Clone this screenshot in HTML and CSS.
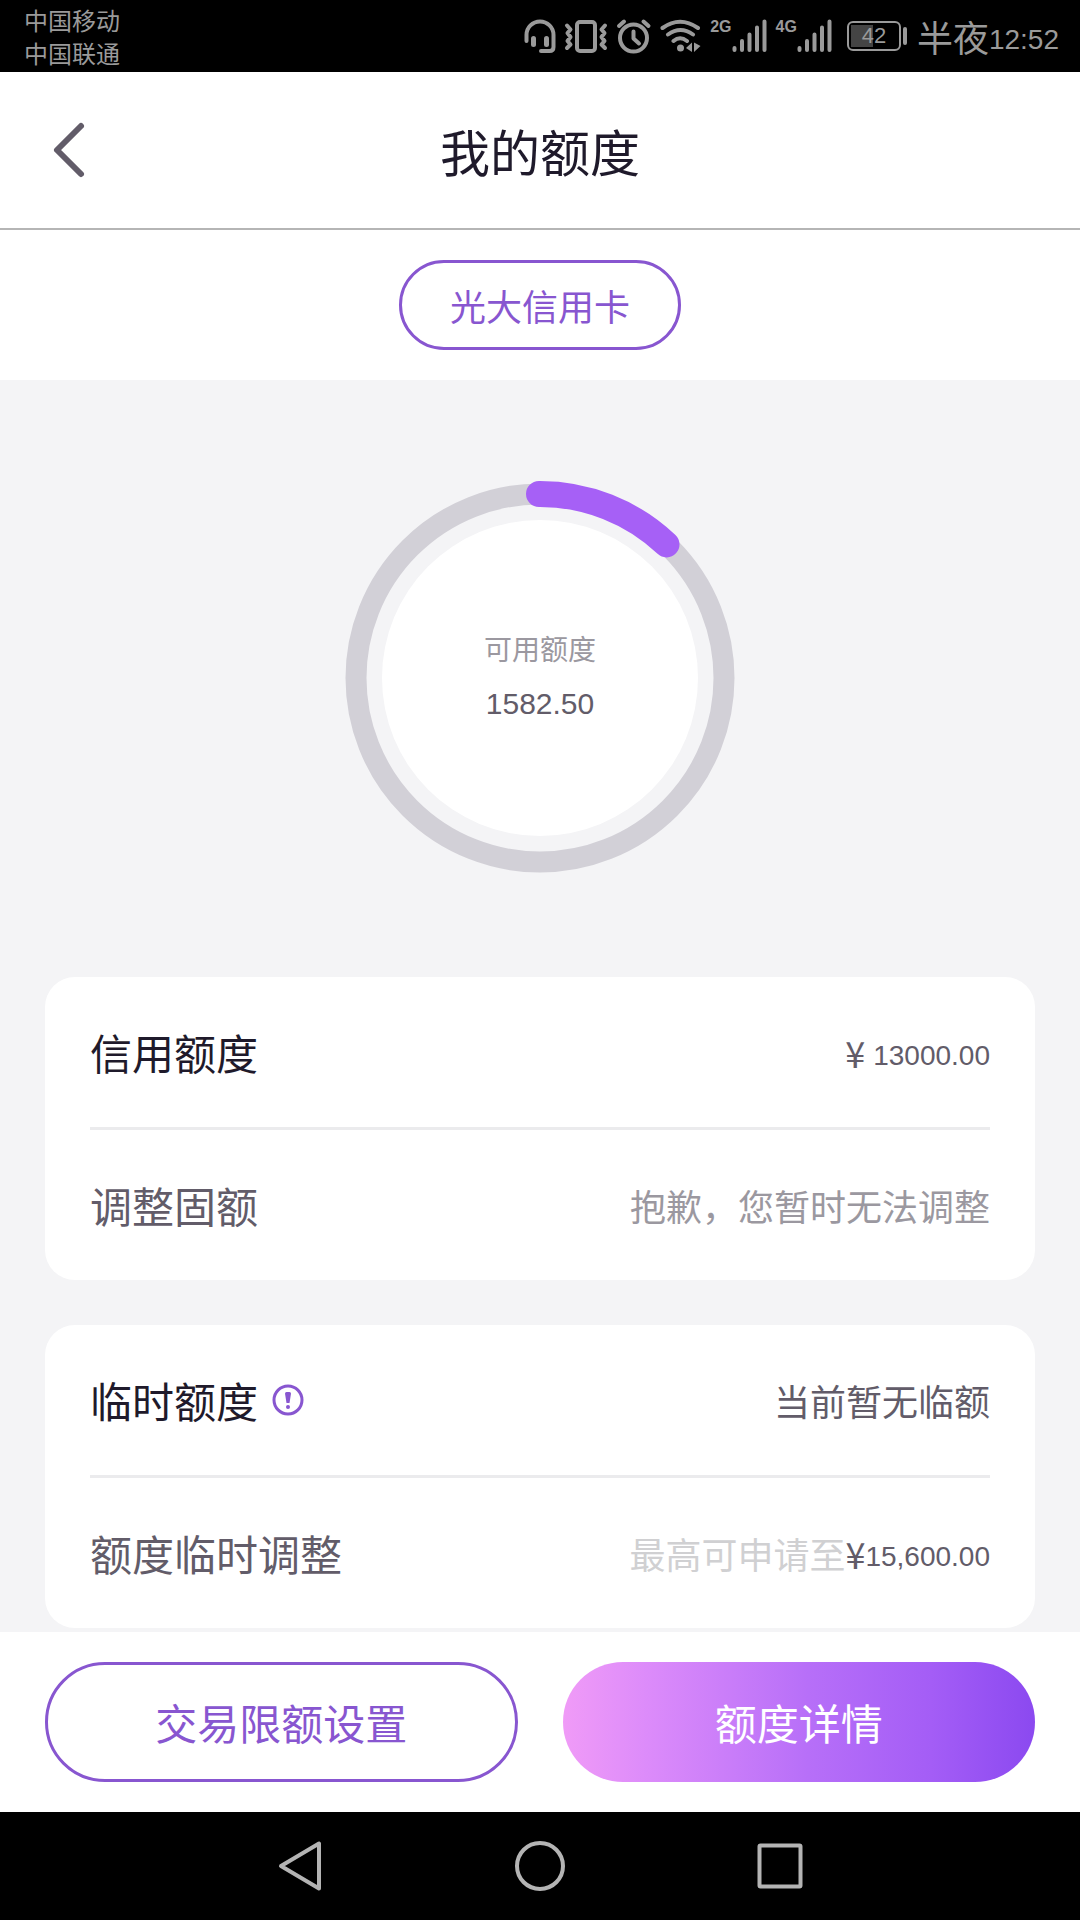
FILE: index.html
```html
<!DOCTYPE html>
<html lang="zh-CN">
<head>
<meta charset="utf-8">
<meta name="viewport" content="width=device-width, initial-scale=1">
<title>我的额度</title>
<link rel="stylesheet" href="styles.css">
</head>
<body>
<div class="screen">
  <div class="status-bar">
    <div class="carriers">
      <span>中国移动</span>
      <span>中国联通</span>
    </div>
    <div class="indicators">
      <svg class="icon" width="32" height="40" viewBox="0 0 32 40" aria-hidden="true">
        <path d="M2.5 25V19a13.5 13.5 0 0 1 27 0v12q0 4-4 4H17"/>
        <rect class="solid" x="7" y="20" width="5" height="11" rx="2.5"/>
        <rect class="solid" x="20" y="20" width="5" height="11" rx="2.5"/>
      </svg>
      <svg class="icon" width="44" height="40" viewBox="0 0 44 40" aria-hidden="true">
        <rect x="13" y="6" width="18" height="29" rx="3"/>
        <path d="M3 9.500l3.500 4-3 3.500 3 4-3 4 3 3.500-3.500 3.500M41 9.500l-3.500 4 3 3.500-3 4 3 4-3 3.500 3.500 3.500"/>
      </svg>
      <svg class="icon" width="36" height="40" viewBox="0 0 36 40" aria-hidden="true">
        <circle cx="17.500" cy="22" r="13.500"/>
        <path d="M17.500 15.500v7l5.500 5M3 10l5-4.500M27.500 5.500l5 4.500"/>
      </svg>
      <svg class="icon" width="42" height="40" viewBox="0 0 42 40" aria-hidden="true">
        <path d="M2.500 12Q20 -.5 38 12M8 18.500Q20.500 9.500 33 18.500M13.500 25Q20 19.500 27 25"/>
        <circle class="solid" cx="20.500" cy="32" r="3.500"/>
        <path class="solid" d="M32 26.500v9.500l-6-4zM34 26.500v9.500l6.500-6z"/>
      </svg>
      <div class="signal">
        <span>2G</span>
        <svg width="36" height="40" viewBox="0 0 36 40" aria-hidden="true">
          <path d="M2.500 32v2M10 25v9M17.500 18.500V34M25 11.500V34M32.500 5.500V34"/>
        </svg>
      </div>
      <div class="signal">
        <span>4G</span>
        <svg width="36" height="40" viewBox="0 0 36 40" aria-hidden="true">
          <path d="M2.500 32v2M10 25v9M17.500 18.500V34M25 11.500V34M32.500 5.500V34"/>
        </svg>
      </div>
      <div class="battery"><span class="battery-level">42</span><i class="battery-tip"></i></div>
      <span class="clock">半夜<span class="digits">12:52</span></span>
    </div>
  </div>

  <header class="header">
    <button class="back" type="button" aria-label="返回">
      <svg width="36" height="60" viewBox="0 0 36 60" aria-hidden="true"><path d="M30 6L6 30L30 54"/></svg>
    </button>
    <h1 class="title">我的额度</h1>
  </header>

  <div class="card-picker">
    <button class="pill" type="button">光大信用卡</button>
  </div>

  <main class="content">
    <section class="gauge">
      <svg class="gauge-ring" width="400" height="400" viewBox="0 0 400 400" aria-hidden="true">
        <circle class="gauge-disc" cx="200" cy="200" r="158"/>
        <circle class="gauge-track" cx="200" cy="200" r="184"/>
        <path class="gauge-arc" d="M199 16A184 184 0 0 1 326.500 66.400"/>
      </svg>
      <div class="gauge-text">
        <span class="gauge-label">可用额度</span>
        <span class="gauge-value">1582.50</span>
      </div>
    </section>

    <section class="card">
      <div class="row">
        <h2 class="label strong">信用额度</h2>
        <span class="value">¥ <span class="digits">13000.00</span></span>
      </div>
      <div class="row">
        <span class="label">调整固额</span>
        <span class="value muted">抱歉，您暂时无法调整</span>
      </div>
    </section>

    <section class="card">
      <div class="row">
        <h2 class="label strong">临时额度</h2>
        <button class="info" type="button" aria-label="临时额度说明">
          <svg width="32" height="32" viewBox="0 0 32 32" aria-hidden="true">
            <circle cx="16" cy="16" r="14"/>
            <path d="M13 9.500q0-1.500 1.500-1.500h3q1.500 0 1.500 1.500L17.500 19h-3z"/>
            <rect x="14" y="21" width="4" height="4" rx="2"/>
          </svg>
        </button>
        <span class="value">当前暂无临额</span>
      </div>
      <div class="row">
        <span class="label">额度临时调整</span>
        <span class="value"><span class="faint">最高可申请至</span>¥<span class="digits">15,600.00</span></span>
      </div>
    </section>
  </main>

  <footer class="actions">
    <button class="action outline" type="button">交易限额设置</button>
    <button class="action filled" type="button">额度详情</button>
  </footer>

  <nav class="nav-bar">
    <button type="button" aria-label="后退"><svg width="56" height="56" viewBox="0 0 56 56" aria-hidden="true"><path d="M9 28L47 5.500V50.500z"/></svg></button>
    <button type="button" aria-label="主屏幕"><svg width="56" height="56" viewBox="0 0 56 56" aria-hidden="true"><circle cx="28" cy="28" r="23"/></svg></button>
    <button type="button" aria-label="最近任务"><svg width="56" height="56" viewBox="0 0 56 56" aria-hidden="true"><rect x="7.500" y="7.500" width="41" height="41" rx="1"/></svg></button>
  </nav>
</div>
</body>
</html>
```
FILE: styles.css
```css
:root {
  --purple: #8856d0;
  --ink: #1f1a2b;
  --text: #625c69;
  --muted: #9b98a0;
  --faint: #d0d0d2;
  --page: #f4f4f6;
  --status: #9a9a9a;
  --numeric: "Liberation Sans", Arial, sans-serif;
}

* { box-sizing: border-box; }

body {
  margin: 0;
  background: #fff;
  color: var(--text);
  font-family: "Noto Sans CJK SC", sans-serif;
  font-size: 36px;
}

h1, h2 { margin: 0; font-weight: 400; }

button {
  padding: 0;
  border: 0;
  background: none;
  color: inherit;
  font: inherit;
  cursor: pointer;
}

svg { display: block; fill: none; }

.digits {
  font-family: var(--numeric);
  font-size: 28px;
  line-height: 1;
  vertical-align: 3px;
}

.screen {
  display: flex;
  flex-direction: column;
  min-height: 100vh;
}

/* System status bar */
.status-bar {
  display: flex;
  justify-content: space-between;
  align-items: center;
  height: 72px;
  padding: 0 21px 0 24px;
  background: #000;
  color: var(--status);
}

.carriers {
  display: flex;
  flex-direction: column;
  font-size: 24px;
  line-height: 33px;
}

.indicators { display: flex; align-items: center; gap: 8px; }

.icon, .signal svg {
  stroke: var(--status);
  stroke-width: 4;
  stroke-linecap: round;
  stroke-linejoin: round;
}

.icon .solid { fill: var(--status); stroke: none; }

.signal { display: flex; }

.signal span {
  font: bold 16px/22px var(--numeric);
}

.battery {
  display: flex;
  align-items: center;
  gap: 2px;
  margin: 0 2px 0 6px;
}

.battery-level {
  width: 54px;
  height: 30px;
  padding: 1px;
  border: 2px solid var(--status);
  border-radius: 6px;
  background: linear-gradient(#444, #444) 2px 50% / 22px 22px no-repeat;
  font: 22px/24px var(--numeric);
  text-align: center;
}

.battery-tip {
  width: 4px;
  height: 18px;
  border-radius: 2px;
  background: var(--status);
}

.clock { line-height: 40px; }

/* Page header */
.header {
  display: grid;
  grid-template-columns: 1fr auto 1fr;
  align-items: center;
  height: 158px;
  padding: 0 51px;
  border-bottom: 2px solid #b5b5b5;
}

.back { justify-self: start; }

.back svg {
  stroke: var(--text);
  stroke-width: 6;
  stroke-linecap: round;
  stroke-linejoin: round;
}

.title { color: var(--ink); font-size: 50px; line-height: 72px; }

.card-picker {
  display: flex;
  justify-content: center;
  padding: 30px;
}

.pill {
  height: 90px;
  padding: 0 48px;
  border: 3px solid var(--purple);
  border-radius: 45px;
  color: var(--purple);
}

/* Limits */
.content {
  flex: 1;
  padding: 0 45px 4px;
  background: var(--page);
}

.gauge {
  display: grid;
  place-items: center;
  padding: 98px 0 99px;
}

.gauge > * { grid-area: 1 / 1; }

.gauge-disc { fill: #fff; }
.gauge-track { stroke: #d2d0d7; stroke-width: 21; }
.gauge-arc { stroke: #a660f6; stroke-width: 26; stroke-linecap: round; }

.gauge-text {
  display: flex;
  flex-direction: column;
  align-items: center;
  gap: 16px;
  padding-bottom: 4px;
  line-height: 40px;
}

.gauge-label { color: var(--muted); font-size: 28px; }
.gauge-value { font-family: var(--numeric); font-size: 30px; }

.card {
  padding: 0 45px;
  border-radius: 30px;
  background: #fff;
}

.card + .card { margin-top: 45px; }

.row {
  display: flex;
  align-items: center;
  height: 150px;
}

.row + .row {
  height: 153px;
  border-top: 3px solid #ebebed;
}

.label { padding-bottom: 2px; font-size: 42px; }
.strong { color: var(--ink); }
.value { margin-left: auto; }
.muted { color: var(--muted); }
.faint { color: var(--faint); }

.info { margin-left: 14px; }
.info svg { fill: var(--purple); }
.info circle { fill: none; stroke: var(--purple); stroke-width: 3; }

/* Bottom actions */
.actions {
  display: grid;
  grid-template-columns: 1fr 1fr;
  gap: 45px;
  padding: 30px 45px;
}

.action {
  height: 120px;
  padding-bottom: 2px;
  border-radius: 60px;
  font-size: 42px;
}

.outline { border: 3px solid var(--purple); color: var(--purple); }

.filled {
  background: linear-gradient(90deg, #f09bf7, #dc8bfa 18%, #b76ff8 52%, #a45df6 78%, #8b49f0);
  color: #fff;
}

/* System navigation */
.nav-bar {
  display: flex;
  justify-content: center;
  align-items: center;
  gap: 184px;
  height: 108px;
  background: #000;
}

.nav-bar svg {
  stroke: #b4b4b4;
  stroke-width: 4;
  stroke-linejoin: round;
}
```
